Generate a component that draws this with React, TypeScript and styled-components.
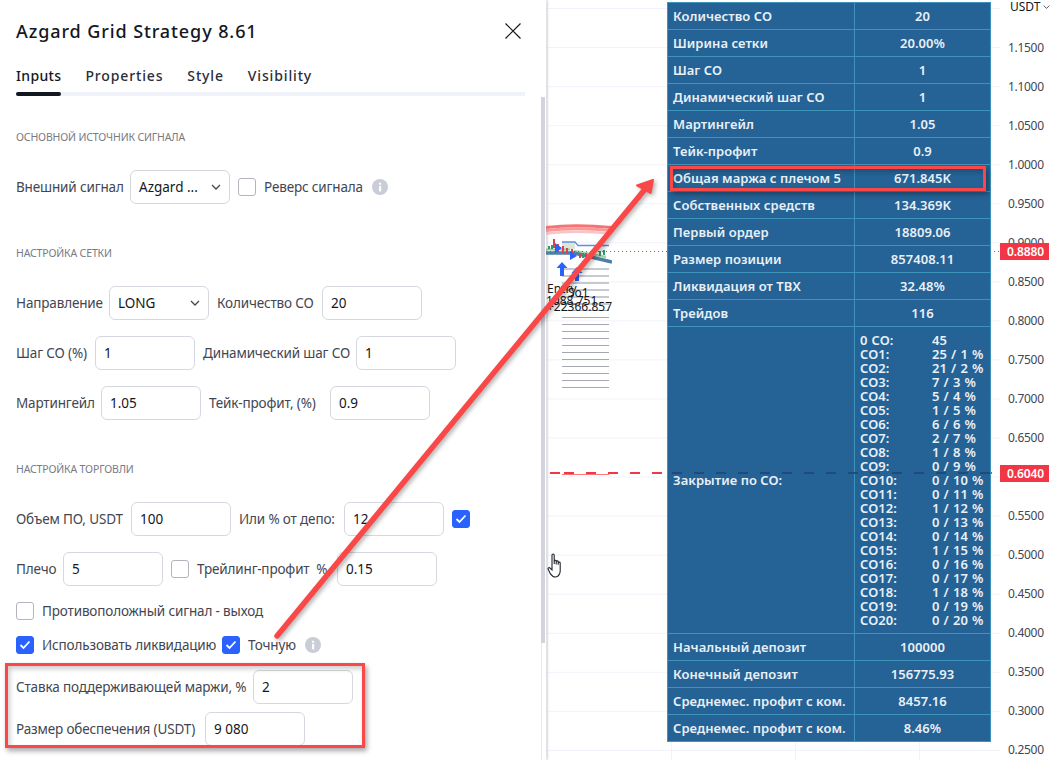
import React from "react";
import styled, { createGlobalStyle } from "styled-components";

const GlobalStyle = createGlobalStyle`
  html, body {
    margin: 0;
    padding: 0;
    background: #fff;
  }
  body {
    font-family: "Noto Sans", "Open Sans", sans-serif;
    color: #131722;
  }
`;

const statsTop = [
  ["Количество СО", "20"],
  ["Ширина сетки", "20.00%"],
  ["Шаг СО", "1"],
  ["Динамический шаг СО", "1"],
  ["Мартингейл", "1.05"],
  ["Тейк-профит", "0.9"],
  ["Общая маржа с плечом 5", "671.845K"],
  ["Собственных средств", "134.369K"],
  ["Первый ордер", "18809.06"],
  ["Размер позиции", "857408.11"],
  ["Ликвидация от ТВХ", "32.48%"],
  ["Трейдов", "116"],
];

const statsBottom = [
  ["Начальный депозит", "100000"],
  ["Конечный депозит", "156775.93"],
  ["Среднемес. профит с ком.", "8457.16"],
  ["Среднемес. профит с ком.", "8.46%"],
];

const closes = [
  "25 / 1 %", "21 / 2 %", "7 / 3 %", "5 / 4 %", "1 / 5 %", "6 / 6 %", "2 / 7 %",
  "1 / 8 %", "0 / 9 %", "0 / 10 %", "0 / 11 %", "1 / 12 %", "0 / 13 %", "0 / 14 %",
  "1 / 15 %", "0 / 16 %", "0 / 17 %", "1 / 18 %", "0 / 19 %", "0 / 20 %",
];

const prices = [
  "1.1500", "1.1000", "1.0500", "1.0000", "0.9500", "0.9000", "0.8500", "0.8000",
  "0.7500", "0.7000", "0.6500", "0.6000", "0.5500", "0.5000", "0.4500", "0.4000",
  "0.3500", "0.3000", "0.2500",
];

const Chevron = () => (
  <svg width="10" height="6" viewBox="0 0 10 6" fill="none">
    <path d="M1 1l4 4 4-4" stroke="#434651" strokeWidth="1.3" />
  </svg>
);

const Info = () => (
  <svg width="16" height="16" viewBox="0 0 16 16">
    <circle cx="8" cy="8" r="8" fill="#c9cdd8" />
    <rect x="7" y="7" width="2.2" height="5.4" fill="#fff" />
    <rect x="7" y="3.8" width="2.2" height="2" fill="#fff" />
  </svg>
);

const Field = ({ value }: { value: string }) => <Input readOnly value={value} />;

const Check = ({ on }: { on?: boolean }) => (
  <CheckBox $on={on}>
    {on && (
      <svg width="12" height="10" viewBox="0 0 12 10" fill="none">
        <path d="M1.5 5l3 3 6-6.5" stroke="#fff" strokeWidth="1.8" />
      </svg>
    )}
  </CheckBox>
);

const Pick = ({ value }: { value: string }) => (
  <SelectBox>
    <span>{value}</span>
    <Chevron />
  </SelectBox>
);

const MiniChart = () => (
  <svg width="66" height="60" viewBox="0 0 66 60" fill="none">
    <path d="M0 5.500C20 3 40 3 66 5.500" stroke="#f77272" strokeWidth="3" />
    <path d="M0 8.500C20 6 40 6 66 8.500" stroke="#f89a9a" strokeWidth="3" />
    <path d="M0 11.500C20 9 40 9 66 11.500" stroke="#fbc4c4" strokeWidth="2.500" />
    <rect x="16" y="20" width="13" height="7" fill="#dde6d6" />
    <path d="M16 20H29L32 23.500H63" stroke="#5b8fe8" strokeWidth="1.3" />
    <path d="M28 29L60 35" stroke="#9fd4a2" strokeWidth="2.500" />
    <path d="M0 27.500H24" stroke="#8fce9a" strokeWidth="2" />
    <path d="M0 31H28L66 40" stroke="#4f7fa8" strokeWidth="3.500" />
    <path d="M8 17V26M12 22V30M17 24V31M21 26V32M26 27V33M34 31V36M40 31V35M46 33V37" stroke="#d9434e" strokeWidth="2" />
    <path d="M3 24V27M6 23V27M37 31V36M44 31V36M54 29V34M58 28V33" stroke="#2e9c6a" strokeWidth="2" />
    <path d="M9 21L16 26L9 31Z" fill="#2962ff" />
    <path d="M24 29L31 34L24 38Z" fill="#2962ff" />
    <path d="M16 54V42" stroke="#2962ff" strokeWidth="4" />
    <path d="M10.500 46L16 40L21.500 46Z" fill="#2962ff" />
    <path d="M31 59V47" stroke="#2962ff" strokeWidth="4" />
    <path d="M25.500 51L31 45L36.500 51Z" fill="#2962ff" />
  </svg>
);

const HandCursor = () => (
  <svg width="18" height="26" viewBox="0 0 18 26" fill="#fff" stroke="#22252e" strokeWidth="1.1">
    <path d="M5 2.200c0-1.600 2.200-1.600 2.200 0V11V8.200c0-1.200 2-1.200 2 0V11.400V8.800c0-1.200 2-1.200 2 0v3V10c0-1.200 2-1.200 2 0v6.500c0 1 .3 2.500-.7 4.500c-.9 1.800-2.300 3-4.300 3c-2.600 0-3.600-1.500-5-3.500L1.300 16.500c-.9-1.200.7-2.500 1.800-1.400L5 17Z" />
  </svg>
);

export default function App() {
  return (
    <Page>
      <GlobalStyle />
      <Panel>
        <Header>
          <Title>Azgard Grid Strategy 8.61</Title>
          <CloseIcon width="16" height="16" viewBox="0 0 16 16">
            <path d="M.5.5l15 15M15.500.5l-15 15" stroke="#131722" strokeWidth="1.2" />
          </CloseIcon>
        </Header>
        <Tabs>
          <Tab $active>Inputs</Tab>
          <Tab>Properties</Tab>
          <Tab>Style</Tab>
          <Tab>Visibility</Tab>
        </Tabs>
        <Body>
          <Section $top={33}>Основной источник сигнала</Section>
          <Row $top={25}>
            <Label $w={106}>Внешний сигнал</Label>
            <Pick value="Azgard ..." />
            <Check />
            <Label>Реверс сигнала</Label>
            <InfoSlot><Info /></InfoSlot>
          </Row>
          <Section $top={41}>Настройка сетки</Section>
          <Row $top={25}>
            <Label $w={85}>Направление</Label>
            <Pick value="LONG" />
            <Label $w={97}>Количество СО</Label>
            <Field value="20" />
          </Row>
          <Row $top={16}>
            <Label $w={71}>Шаг СО (%)</Label>
            <Field value="1" />
            <Label $w={145}>Динамический шаг СО</Label>
            <Field value="1" />
          </Row>
          <Row $top={16}>
            <Label $w={77}>Мартингейл</Label>
            <Field value="1.05" />
            <Label $w={113}>Тейк-профит, (%)</Label>
            <Field value="0.9" />
          </Row>
          <Section $top={41}>Настройка торговли</Section>
          <Row $top={25}>
            <Label $w={107}>Объем ПО, USDT</Label>
            <Field value="100" />
            <Label $w={97}>Или % от депо:</Label>
            <Field value="12" />
            <Check on />
          </Row>
          <Row $top={16}>
            <Label $w={39}>Плечо</Label>
            <Field value="5" />
            <Check />
            <Label $w={132}>Трейлинг-профит&nbsp; %</Label>
            <Field value="0.15" />
          </Row>
          <Row $top={8}>
            <Check />
            <Label>Противоположный сигнал - выход</Label>
          </Row>
          <Row>
            <Check on />
            <Label $w={172}>Использовать ликвидацию</Label>
            <Check on />
            <Label>Точную</Label>
            <InfoSlot><Info /></InfoSlot>
          </Row>
          <Row $top={8}>
            <Label $w={229}>Ставка поддерживающей маржи, %</Label>
            <Field value="2" />
          </Row>
          <Row $top={8}>
            <Label $w={181}>Размер обеспечения (USDT)</Label>
            <Field value="9 080" />
          </Row>
        </Body>
        <ScrollThumb />
      </Panel>

      <Chart>
        <Plot>
          <Ghosts>
            {Array.from({ length: 18 }, (_, i) => (
              <Ghost key={i} $fade={i < 6} />
            ))}
          </Ghosts>
          <MiniChartSlot><MiniChart /></MiniChartSlot>
          <ChartNote $x={1} $y={282}>Entry</ChartNote>
          <ChartNote $x={22} $y={286}>So1</ChartNote>
          <ChartNote $x={0} $y={294}>1088.751</ChartNote>
          <ChartNote $x={1} $y={300}>+22366.857</ChartNote>
          <DottedLine />
          <DashedLine />
          <StopLine />
          <CursorSlot><HandCursor /></CursorSlot>
        </Plot>
        <Axis>
          <Currency>USDT <Chevron /></Currency>
          {prices.map((p) => (
            <Tick key={p}>{p}</Tick>
          ))}
        </Axis>
        <StatsTable>
          <tbody>
            {statsTop.map(([k, v]) => (
              <tr key={k}>
                <KeyCell>{k}</KeyCell>
                <ValueCell>{v}</ValueCell>
              </tr>
            ))}
            <tr>
              <KeyCell>Закрытие по СО:</KeyCell>
              <ListCell>
                <CloseList>
                  <span>0 СО:</span>
                  <span>45</span>
                  {closes.map((c, i) => (
                    <React.Fragment key={c}>
                      <span>СО{i + 1}:</span>
                      <span>{c}</span>
                    </React.Fragment>
                  ))}
                </CloseList>
              </ListCell>
            </tr>
            {statsBottom.map(([k, v]) => (
              <tr key={v}>
                <KeyCell>{k}</KeyCell>
                <ValueCell>{v}</ValueCell>
              </tr>
            ))}
          </tbody>
        </StatsTable>
        <TableDash />
        <PriceTag $y={243}>0.8880</PriceTag>
        <PriceTag $y={465}>0.6040</PriceTag>
      </Chart>

      <Callout $x={5} $y={663} $w={360} $h={85} />
      <Callout $x={670} $y={166} $w={316} $h={25} />
      <ArrowLayer width="1055" height="760" viewBox="0 0 1055 760">
        <path d="M277 636L646 188" stroke="#fa4848" strokeWidth="5.5" strokeLinecap="round" />
        <path d="M653 180L637 185.500L650.500 193Z" fill="#fa4848" stroke="#fa4848" strokeWidth="2" strokeLinejoin="round" />
      </ArrowLayer>
    </Page>
  );
}

const Page = styled.div`
  position: relative;
  display: flex;
  width: 1055px;
  height: 760px;
  overflow: hidden;
`;

const Panel = styled.div`
  position: relative;
  flex: 0 0 546px;
  background: #fff;
  box-shadow: 1px 0 3px rgba(120, 123, 134, 0.35);
  z-index: 1;
`;

const Header = styled.div`
  display: flex;
  align-items: center;
  justify-content: space-between;
  height: 30px;
  padding: 16px 25px 16px 16px;
`;

const Title = styled.div`
  font-size: 18px;
  font-weight: 500;
  letter-spacing: 0.9px;
  line-height: 30px;
`;

const CloseIcon = styled.svg`
  display: block;
`;

const Tabs = styled.div`
  display: flex;
  gap: 24px;
  height: 30px;
  margin: 0 21px 0 16px;
  border-bottom: 4px solid #f0f3fa;
`;

const Tab = styled.div<{ $active?: boolean }>`
  position: relative;
  font-size: 14px;
  font-weight: 500;
  letter-spacing: ${(p) => (p.$active ? 0.35 : 0.85)}px;
  line-height: 28px;
  color: ${(p) => (p.$active ? "#131722" : "#2a2e39")};

  &::after {
    content: "";
    display: ${(p) => (p.$active ? "block" : "none")};
    position: absolute;
    left: 0;
    right: 0;
    bottom: -4px;
    height: 4px;
    border-radius: 2px;
    background: #131722;
  }
`;

const Body = styled.div`
  padding-left: 16px;
`;

const Section = styled.div<{ $top: number }>`
  margin-top: ${(p) => p.$top}px;
  font-size: 10.5px;
  letter-spacing: -0.15px;
  line-height: 16px;
  text-transform: uppercase;
  color: #787b86;
`;

const Row = styled.div<{ $top?: number }>`
  display: flex;
  align-items: center;
  gap: 8px;
  height: 34px;
  margin-top: ${(p) => p.$top ?? 0}px;
`;

const Label = styled.span<{ $w?: number }>`
  flex: none;
  width: ${(p) => (p.$w ? `${p.$w}px` : "auto")};
  font-size: 13.5px;
  letter-spacing: -0.15px;
  white-space: nowrap;
  color: #434651;
`;

const Input = styled.input`
  box-sizing: border-box;
  width: 100px;
  height: 34px;
  padding: 0 8px;
  border: 1px solid #d6d8e0;
  border-radius: 6px;
  outline: none;
  background: #fff;
  font: inherit;
  font-size: 13.5px;
  color: #131722;
`;

const SelectBox = styled.div`
  box-sizing: border-box;
  display: flex;
  align-items: center;
  justify-content: space-between;
  width: 100px;
  height: 34px;
  padding: 0 8px;
  border: 1px solid #d6d8e0;
  border-radius: 6px;
  font-size: 13.5px;
  color: #131722;
`;

const CheckBox = styled.span<{ $on?: boolean }>`
  box-sizing: border-box;
  display: flex;
  align-items: center;
  justify-content: center;
  flex: none;
  width: 18px;
  height: 18px;
  border: 1px solid ${(p) => (p.$on ? "#2962ff" : "#b2b5be")};
  border-radius: 3px;
  background: ${(p) => (p.$on ? "#2962ff" : "#fff")};
`;

const InfoSlot = styled.span`
  display: flex;
  margin-left: 1px;
`;

const ScrollThumb = styled.div`
  position: absolute;
  top: 97px;
  right: 1px;
  width: 4px;
  height: 546px;
  background: #d1d4dc;

  &::after {
    content: "";
    position: absolute;
    top: 100%;
    left: 0;
    width: 1px;
    height: 120px;
    background: #e6e8ef;
  }
`;

const Chart = styled.div`
  position: relative;
  flex: 1;
  display: flex;
  background: #fff;
`;

const Plot = styled.div`
  position: relative;
  flex: 1;
  background-image:
    linear-gradient(#f0f3fa 1px, transparent 1px),
    linear-gradient(90deg, #f0f3fa 1px, transparent 1px);
  background-size: 100% 39.05px, 124px 100%;
  background-position: 0 8px, 1px 0;
`;

const Axis = styled.div`
  flex: 0 0 55px;
  display: grid;
  grid-template-rows: 27.5px;
  grid-auto-rows: 39.05px;
  justify-items: start;
  align-content: start;
  padding-left: 8px;
  box-sizing: border-box;
`;

const Currency = styled.div`
  display: flex;
  align-items: flex-start;
  gap: 3px;
  margin-top: -1px;
  padding-left: 2px;
  font-size: 12px;
  line-height: 15px;
  color: #131722;

  svg {
    margin-top: 5px;
    width: 7px;
  }
`;

const Tick = styled.div`
  font-size: 12px;
  letter-spacing: -0.3px;
  line-height: 39px;
  color: #434651;
`;

const StatsTable = styled.table`
  position: absolute;
  top: 2px;
  left: 121px;
  width: 324px;
  border-collapse: collapse;
  table-layout: fixed;
  background: #256295;
  font-size: 13px;
  font-weight: 600;
  letter-spacing: 0.05px;
  color: #e9f0f5;
`;

const KeyCell = styled.td`
  width: 187px;
  height: 26px;
  padding: 0 0 0 5px;
  border: 1px solid #3e93bb;
  box-sizing: border-box;
  white-space: nowrap;
`;

const ValueCell = styled.td`
  height: 26px;
  padding: 0;
  border: 1px solid #3e93bb;
  text-align: center;
`;

const ListCell = styled.td`
  padding: 6px 0 6px 5px;
  border: 1px solid #3e93bb;
`;

const CloseList = styled.div`
  display: grid;
  grid-template-columns: 72px 1fr;
  grid-auto-rows: 14px;
  line-height: 14px;
  white-space: pre;
  word-spacing: 0.7px;
`;

const Ghosts = styled.div`
  position: absolute;
  top: 265px;
  left: 16px;
  display: grid;
  grid-auto-rows: 7px;
  width: 47px;
`;

const Ghost = styled.div<{ $fade?: boolean }>`
  height: ${(p) => (p.$fade ? 2 : 1)}px;
  margin-top: 3px;
  background: ${(p) => (p.$fade ? "#c9cad0" : "#a6a8b0")};
`;

const MiniChartSlot = styled.div`
  position: absolute;
  top: 222px;
  left: 0;
`;

const ChartNote = styled.span<{ $x: number; $y: number }>`
  position: absolute;
  left: ${(p) => p.$x}px;
  top: ${(p) => p.$y}px;
  font-size: 12px;
  line-height: 14px;
  white-space: nowrap;
  color: #131722;
`;

const DottedLine = styled.div`
  position: absolute;
  top: 251px;
  left: 0;
  right: 0;
  height: 1px;
  background: repeating-linear-gradient(90deg, #f23645 0 1px, transparent 1px 4px);
`;

const DashedLine = styled.div`
  position: absolute;
  top: 472px;
  left: 0;
  right: 0;
  height: 2px;
  background: repeating-linear-gradient(90deg, #f23645 0 10px, transparent 10px 22px);
  background-position: 18px 0;
`;

const StopLine = styled.div`
  position: absolute;
  top: 474px;
  left: 16px;
  width: 47px;
  height: 1px;
  background: #f77;
`;

const TableDash = styled.div`
  position: absolute;
  top: 472px;
  left: 121px;
  width: 324px;
  height: 1.5px;
  background: repeating-linear-gradient(90deg, #1f4a7d 0 10px, transparent 10px 22px);
  background-position: 5px 0;
`;

const CursorSlot = styled.div`
  position: absolute;
  top: 553px;
  left: 1px;
`;

const PriceTag = styled.div<{ $y: number }>`
  position: absolute;
  top: ${(p) => p.$y}px;
  left: 454px;
  box-sizing: border-box;
  width: 49px;
  height: 17px;
  padding-right: 5px;
  background: #f23645;
  font-size: 12px;
  font-weight: 600;
  letter-spacing: -0.1px;
  line-height: 17px;
  text-align: right;
  color: #fff;
`;

const Callout = styled.div<{ $x: number; $y: number; $w: number; $h: number }>`
  position: absolute;
  left: ${(p) => p.$x}px;
  top: ${(p) => p.$y}px;
  width: ${(p) => p.$w}px;
  height: ${(p) => p.$h}px;
  box-sizing: border-box;
  border: 3px solid #fa4848;
  box-shadow: 2px 3px 5px rgba(0, 0, 0, 0.35), inset 2px 3px 5px rgba(0, 0, 0, 0.2);
  z-index: 2;
`;

const ArrowLayer = styled.svg`
  position: absolute;
  left: 0;
  top: 0;
  z-index: 3;
  pointer-events: none;
  filter: drop-shadow(2px 2px 2px rgba(0, 0, 0, 0.3));
`;
